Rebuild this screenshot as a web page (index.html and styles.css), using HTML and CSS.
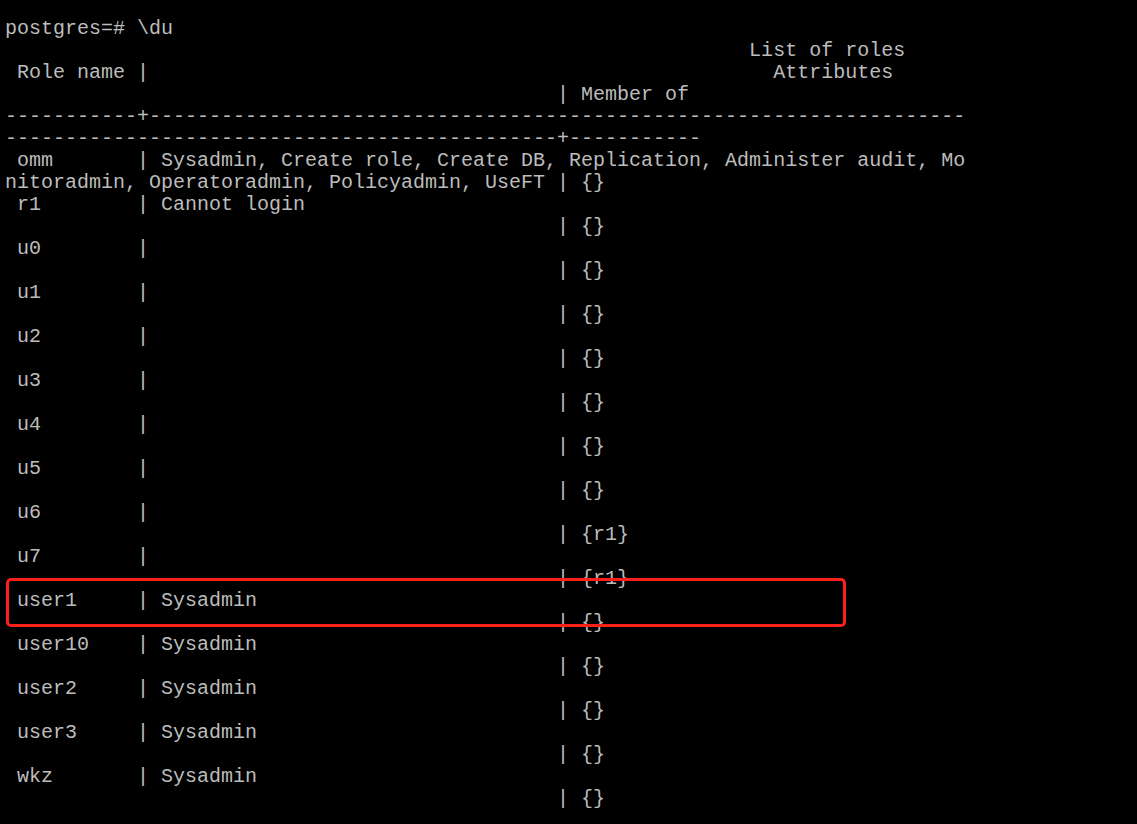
FILE: index.html
```html
<!DOCTYPE html>
<html>
<head>
<meta charset="utf-8">
<link rel="stylesheet" href="styles.css">
</head>
<body>
<div class="term">
<pre class="screen">postgres=# \du
                                                              List of roles
 Role name |                                                    Attributes
                                              | Member of
-----------+--------------------------------------------------------------------
----------------------------------------------+-----------
 omm       | Sysadmin, Create role, Create DB, Replication, Administer audit, Mo
nitoradmin, Operatoradmin, Policyadmin, UseFT | {}
 r1        | Cannot login
                                              | {}
 u0        |
                                              | {}
 u1        |
                                              | {}
 u2        |
                                              | {}
 u3        |
                                              | {}
 u4        |
                                              | {}
 u5        |
                                              | {}
 u6        |
                                              | {r1}
 u7        |
                                              | {r1}
 user1     | Sysadmin
                                              | {}
 user10    | Sysadmin
                                              | {}
 user2     | Sysadmin
                                              | {}
 user3     | Sysadmin
                                              | {}
 wkz       | Sysadmin
                                              | {}</pre>
<div class="highlight"></div>
</div>
</body>
</html>
```
FILE: styles.css
```css
html, body {
  margin: 0;
  padding: 0;
  background: #000;
  height: 100%;
  overflow: hidden;
}
.term {
  position: relative;
  width: 1137px;
  height: 824px;
  background: #000;
}
.screen {
  margin: 0;
  padding: 18px 0 0 5px;
  font-family: "Liberation Mono", "Courier New", monospace;
  font-size: 20px;
  line-height: 22px;
  color: #bcbcbc;
  white-space: pre;
}
.highlight {
  position: absolute;
  left: 6px;
  top: 578px;
  width: 834px;
  height: 43px;
  border: 3px solid #ff1f1a;
  border-radius: 5px;
}
```
